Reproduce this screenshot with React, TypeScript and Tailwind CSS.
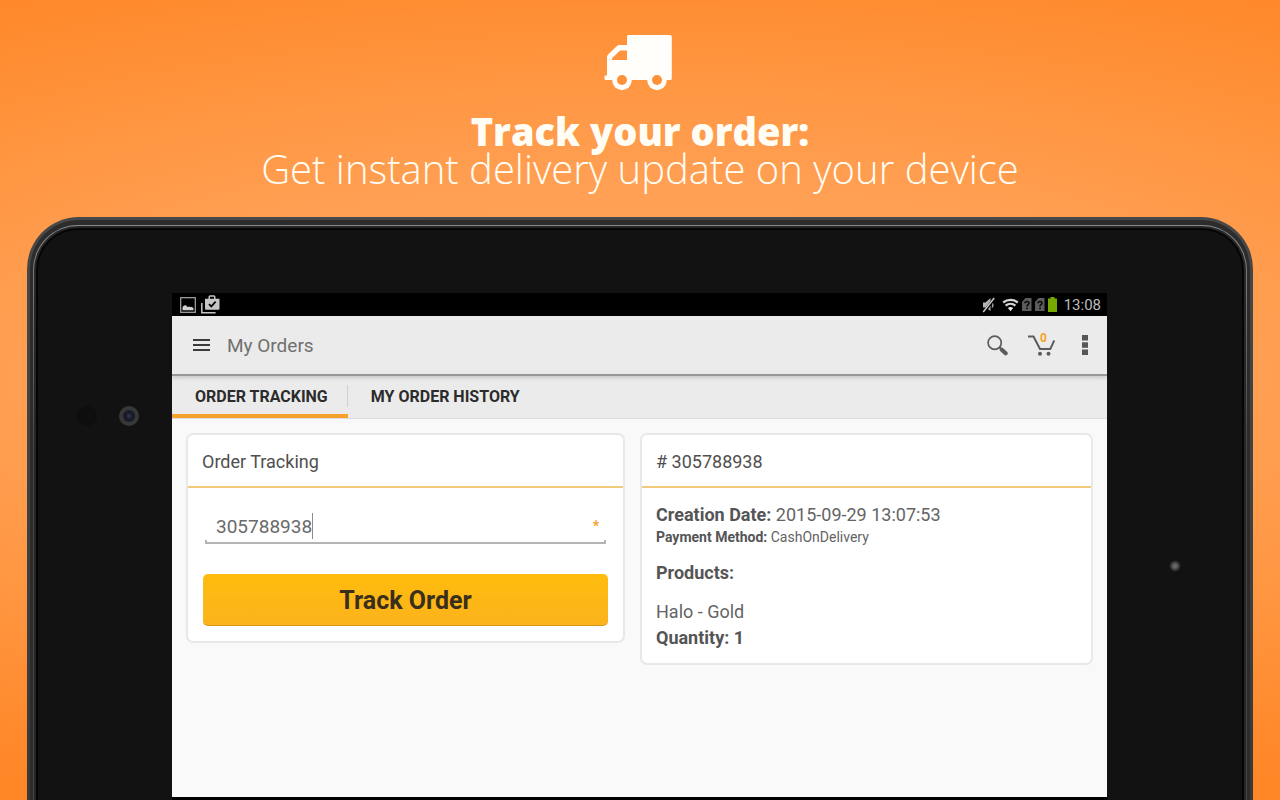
import type { ReactNode } from 'react';

const TABS = [
  { label: 'ORDER TRACKING', active: true },
  { label: 'MY ORDER HISTORY', active: false },
];

function TruckIcon() {
  return (
    <svg width="69" height="57" viewBox="46 14 69 57" overflow="visible" fill="#fffefa" aria-hidden="true">
      <path
        fillRule="evenodd"
        d="M68.500 15H110a1.800 1.800 0 0 1 1.800 1.800V58.500a1.500 1.500 0 0 1-1.500 1.500H45.800a1.300 1.300 0 0 1-1.300-1.300v-2a1.300 1.300 0 0 1 1.300-1.300H47V37.500c0-1.400.6-2.500 1.600-3.500l7.600-7.300c1-1 2.200-1.600 3.600-1.600H67V16.500A1.500 1.500 0 0 1 68.500 15ZM67 30.500h-6c-.6 0-1.100.2-1.500.6L52 38.300V40H67Z"
      />
      <circle cx="62" cy="60.500" r="9.700" />
      <circle cx="97" cy="60.500" r="9.700" />
      <circle cx="62" cy="60" r="5" fill="#ff9138" />
      <circle cx="97" cy="60" r="5" fill="#ff9138" />
    </svg>
  );
}

function ImageIcon() {
  return (
    <svg width="16" height="16" viewBox="0 0 16 16" aria-hidden="true">
      <rect x="0.7" y="0.7" width="14.600" height="14.600" fill="none" stroke="#a9a9a9" strokeWidth="1.200" />
      <path d="M2.500 13.300V10.300C3.300 8.800 4.300 8 5.300 8.200c1.200.2 1.500 1.500 2.600 1.800.8-.8 1.700-.7 2.300.2.700-.8 1.600-.7 2.200 0l1.100 1v2.100Z" fill="#d0d0d0" />
    </svg>
  );
}

function ShopIcon() {
  return (
    <svg width="19" height="19" viewBox="0 0 19 19" aria-hidden="true">
      <path d="M.8 8v9.700h13.800" fill="none" stroke="#c6c6c6" strokeWidth="1.500" />
      <path d="M8.200 4V2a1 1 0 0 1 1-1h3.600a1 1 0 0 1 1 1v2" fill="none" stroke="#c6c6c6" strokeWidth="1.500" />
      <path d="M4 3.800h14.500v10a1 1 0 0 1-1 1H5a1 1 0 0 1-1-1Z" fill="#c6c6c6" />
      <path d="m8 9.200 2.300 2.300 4.300-4.800" fill="none" stroke="#000" strokeWidth="1.800" />
    </svg>
  );
}

function MutedIcon() {
  return (
    <svg width="13" height="16" viewBox="0 0 13 16" aria-hidden="true">
      <path d="M1 5.500h2.500L8.500 1v13L3.500 10.500H1Z" fill="#b5b5b5" />
      <path d="M10 5.500c1 1.300 1 3.700 0 5" fill="none" stroke="#b5b5b5" strokeWidth="1.200" />
      <path d="M12.500 1.500 2 15" stroke="#000" strokeWidth="3" />
      <path d="M12.200 1 1.200 15" stroke="#c8c8c8" strokeWidth="1.500" />
    </svg>
  );
}

function WifiIcon() {
  return (
    <svg width="17" height="14" viewBox="0 0 17 14" aria-hidden="true">
      <path d="M8.500 13.200 5.900 9.900a4.200 4.200 0 0 1 5.200 0Z" fill="#e8e8e8" />
      <path d="M3.600 7.600a7.600 7.600 0 0 1 9.800 0M1.200 4.500a11.600 11.600 0 0 1 14.600 0" fill="none" stroke="#d5d5d5" strokeWidth="2.300" />
    </svg>
  );
}

function NoSimIcon() {
  return (
    <svg width="10" height="13" viewBox="0 0 10 13" aria-hidden="true">
      <path d="M3.500 0H9.500v13H0V4Z" fill="#5c5c5c" />
      <path d="M3 5.200c0-2.300 4-2.300 4 0 0 1.500-2 1.500-2 3.200" fill="none" stroke="#0a0a0a" strokeWidth="1.600" />
      <rect x="4.200" y="9.600" width="1.600" height="1.600" fill="#0a0a0a" />
    </svg>
  );
}

function BatteryIcon() {
  return (
    <svg width="9" height="15" viewBox="0 0 9 15" aria-hidden="true">
      <path d="M2.500 0h4v1.500H9V15H0V1.500h2.500Z" fill="#77a800" />
    </svg>
  );
}

function MenuIcon() {
  return (
    <svg width="17" height="12" viewBox="0 0 17 12" aria-hidden="true">
      <path d="M0 1h17M0 6h17M0 11h17" stroke="#3b3b3b" strokeWidth="1.800" />
    </svg>
  );
}

function SearchIcon() {
  return (
    <svg width="21" height="21" viewBox="0 0 21 21" aria-hidden="true">
      <circle cx="7.700" cy="7.700" r="6.600" fill="none" stroke="#5c5c5c" strokeWidth="1.700" />
      <path d="m12.300 12.300 2.500 2.200" stroke="#5c5c5c" strokeWidth="1.800" />
      <path d="m14.800 14.800 3.800 3.500" stroke="#5c5c5c" strokeWidth="4.200" strokeLinecap="round" />
    </svg>
  );
}

function CartIcon() {
  return (
    <svg width="27" height="21" viewBox="0 0 27 21" aria-hidden="true">
      <path d="M0 1.500h5.500L12 14h10.300l4-8.500" fill="none" stroke="#5c5c5c" strokeWidth="2" />
      <circle cx="12" cy="18.700" r="2" fill="#5c5c5c" />
      <circle cx="20.500" cy="18.700" r="2" fill="#5c5c5c" />
    </svg>
  );
}

function MoreIcon() {
  return (
    <svg width="6" height="20" viewBox="0 0 6 20" fill="#565656" aria-hidden="true">
      <rect width="6" height="5.500" />
      <rect y="7.300" width="6" height="5.500" />
      <rect y="14.500" width="6" height="5.500" />
    </svg>
  );
}

function StatusBar() {
  return (
    <div className="flex h-[23px] items-center justify-between bg-black pr-[6px] pl-2">
      <div className="flex items-center gap-[5px]">
        <ImageIcon />
        <ShopIcon />
      </div>
      <div className="flex items-center gap-[3px]">
        <MutedIcon />
        <span className="ml-1 flex items-center gap-[3px]">
          <WifiIcon />
          <NoSimIcon />
          <NoSimIcon />
          <BatteryIcon />
        </span>
        <span className="ml-1 text-[15px] leading-5 text-[#bdbdbd]">13:08</span>
      </div>
    </div>
  );
}

function AppBar() {
  return (
    <header className="relative flex h-[60px] items-center border-b-2 border-[#979797] bg-[#ebebeb] pr-[19px] pl-[21px] shadow-[0_2px_4px_rgba(0,0,0,0.15)]">
      <button type="button" aria-label="Menu" className="flex">
        <MenuIcon />
      </button>
      <h2 className="ml-[17px] flex-1 pt-[2px] text-[19px] leading-6 text-[#707070]">My Orders</h2>
      <div className="flex items-center gap-5">
        <button type="button" aria-label="Search" className="flex">
          <SearchIcon />
        </button>
        <button type="button" aria-label="Cart" className="relative flex">
          <CartIcon />
          <span className="absolute -top-[3px] left-3 text-xs leading-3 font-bold text-[#f5a31f]">0</span>
        </button>
        <button type="button" aria-label="More options" className="ml-[7px] flex">
          <MoreIcon />
        </button>
      </div>
    </header>
  );
}

function Tabs() {
  return (
    <nav className="flex h-[43px] border-b border-[#dcdcdc] bg-[#ebebeb]">
      {TABS.map((tab) => (
        <a
          key={tab.label}
          href="#"
          className={`flex items-center border-b-4 pt-1 pr-5 pl-[23px] text-base leading-5 font-bold text-[#2c2c2c] ${
            tab.active
              ? 'border-[#f5a12b] bg-[linear-gradient(#cfcfcf,#cfcfcf)] bg-[length:1px_22px] bg-[position:right_9px] bg-no-repeat'
              : 'border-transparent'
          }`}
        >
          {tab.label}
        </a>
      ))}
    </nav>
  );
}

function Card({ title, children }: { title: string; children: ReactNode }) {
  return (
    <section className="rounded-[7px] border-2 border-[#e8e8e8] bg-white">
      <h3 className="border-b-2 border-[#f1ca7c] px-[14px] pt-[15px] pb-3 text-[18px] leading-6 text-[#4f4f4f]">
        {title}
      </h3>
      {children}
    </section>
  );
}

function TrackingForm() {
  return (
    <Card title="Order Tracking">
      <form className="px-[15px] pt-6 pb-[15px]" onSubmit={(e) => e.preventDefault()}>
        <div className="mx-[2px]">
          <label className="flex h-7 items-center pr-[7px] pl-[11px]">
            <input
              aria-label="Order number"
              defaultValue="305788938"
              className="field-sizing-content bg-transparent pt-[2px] text-[19px] leading-6 text-[#6a6a6a] outline-none"
            />
            <span className="h-[26px] w-px bg-[#8c8c8c]" />
            <span className="ml-auto text-sm leading-4 font-bold text-[#f5a12b]">*</span>
          </label>
          <div className="h-1 border-x-2 border-b-2 border-[#b4b4b4]" />
        </div>
        <button
          type="submit"
          className="mt-[30px] h-[52px] w-full rounded-[5px] border-b border-[#d8941c] bg-linear-to-b from-[#ffbc0c] to-[#fcb31c] pt-[2px] text-[25px] leading-8 font-bold text-[#3a2f1c]"
        >
          Track Order
        </button>
      </form>
    </Card>
  );
}

function OrderDetails() {
  return (
    <Card title="# 305788938">
      <div className="px-[14px] pt-[15px] pb-[13px] text-[18px] leading-6 text-[#646464]">
        <p>
          <strong className="text-[#555555]">Creation Date:</strong> 2015-09-29 13:07:53
        </p>
        <p className="text-sm leading-5">
          <strong className="text-[#555555]">Payment Method:</strong> CashOnDelivery
        </p>
        <h4 className="mt-[14px] font-bold text-[#555555]">Products:</h4>
        <p className="mt-[15px]">Halo - Gold</p>
        <p className="mt-[2px] font-bold text-[#555555]">Quantity: 1</p>
      </div>
    </Card>
  );
}

function Tablet({ children }: { children: ReactNode }) {
  return (
    // Outer shell, bright rim, dark groove and glass, each one inside the other
    <div className="mx-[27px] flex flex-1 rounded-t-[52px] bg-linear-to-b from-[#484848] to-[#383838] px-[3px] pt-[3px]">
      <div className="flex flex-1 rounded-t-[49px] bg-[#2c2c2c] px-[3px] pt-[5px]">
        <div className="flex flex-1 rounded-t-[45px] bg-linear-to-b from-[#8a8a8a] to-[#444444] to-40% px-px pt-px">
          <div className="flex flex-1 rounded-t-[44px] bg-[#262626] px-[2px] pt-[2px]">
            <div className="flex flex-1 rounded-t-[42px] bg-[#050505] px-[2px] pt-[2px]">
              <div className="flex flex-1 rounded-t-[40px] bg-[#121212] pt-[63px]">
                {/* Light sensor and front camera */}
                <div className="flex w-[134px] shrink-0 items-start justify-end gap-[22px] pt-[113px] pr-[33px]">
                  <span className="size-5 rounded-full bg-[#0e0e0e]" />
                  <span className="flex size-5 items-center justify-center rounded-full bg-[#383838]">
                    <span className="flex size-3 items-center justify-center rounded-full bg-[#1a1c26]">
                      <span className="size-1 rounded-full bg-[#2f3350]" />
                    </span>
                  </span>
                </div>
                <main className="flex min-w-0 flex-1 flex-col border-b-3 border-black bg-[#f9f9f9]">{children}</main>
                {/* Notification light */}
                <div className="flex w-[135px] shrink-0 items-start justify-center pt-[267px]">
                  <span className="size-3 rounded-full bg-[radial-gradient(#666666_20%,#121212_70%)]" />
                </div>
              </div>
            </div>
          </div>
        </div>
      </div>
    </div>
  );
}

export default function App() {
  return (
    <div className="flex min-h-screen flex-col bg-[#ff8625] bg-[radial-gradient(ellipse_110%_58%_at_50%_47%,#ffa45a_0%,#ffa055_40%,#ff9743_62%,#ff8a2d_88%,#ff8625_100%)] font-['Roboto','Liberation_Sans',sans-serif]">
      <div className="flex h-[217px] flex-col items-center pt-[34px] text-center font-['Open_Sans','Noto_Sans',sans-serif] text-[#fffdf4]">
        <TruckIcon />
        <h1 className="mt-5 text-[38px] leading-10 font-extrabold">Track your order:</h1>
        <p className="text-[40px] leading-9 font-light">Get instant delivery update on your device</p>
      </div>
      <Tablet>
        <StatusBar />
        <AppBar />
        <Tabs />
        <div className="grid grid-cols-[439fr_453fr] items-start gap-[15px] p-[14px]">
          <TrackingForm />
          <OrderDetails />
        </div>
      </Tablet>
    </div>
  );
}
